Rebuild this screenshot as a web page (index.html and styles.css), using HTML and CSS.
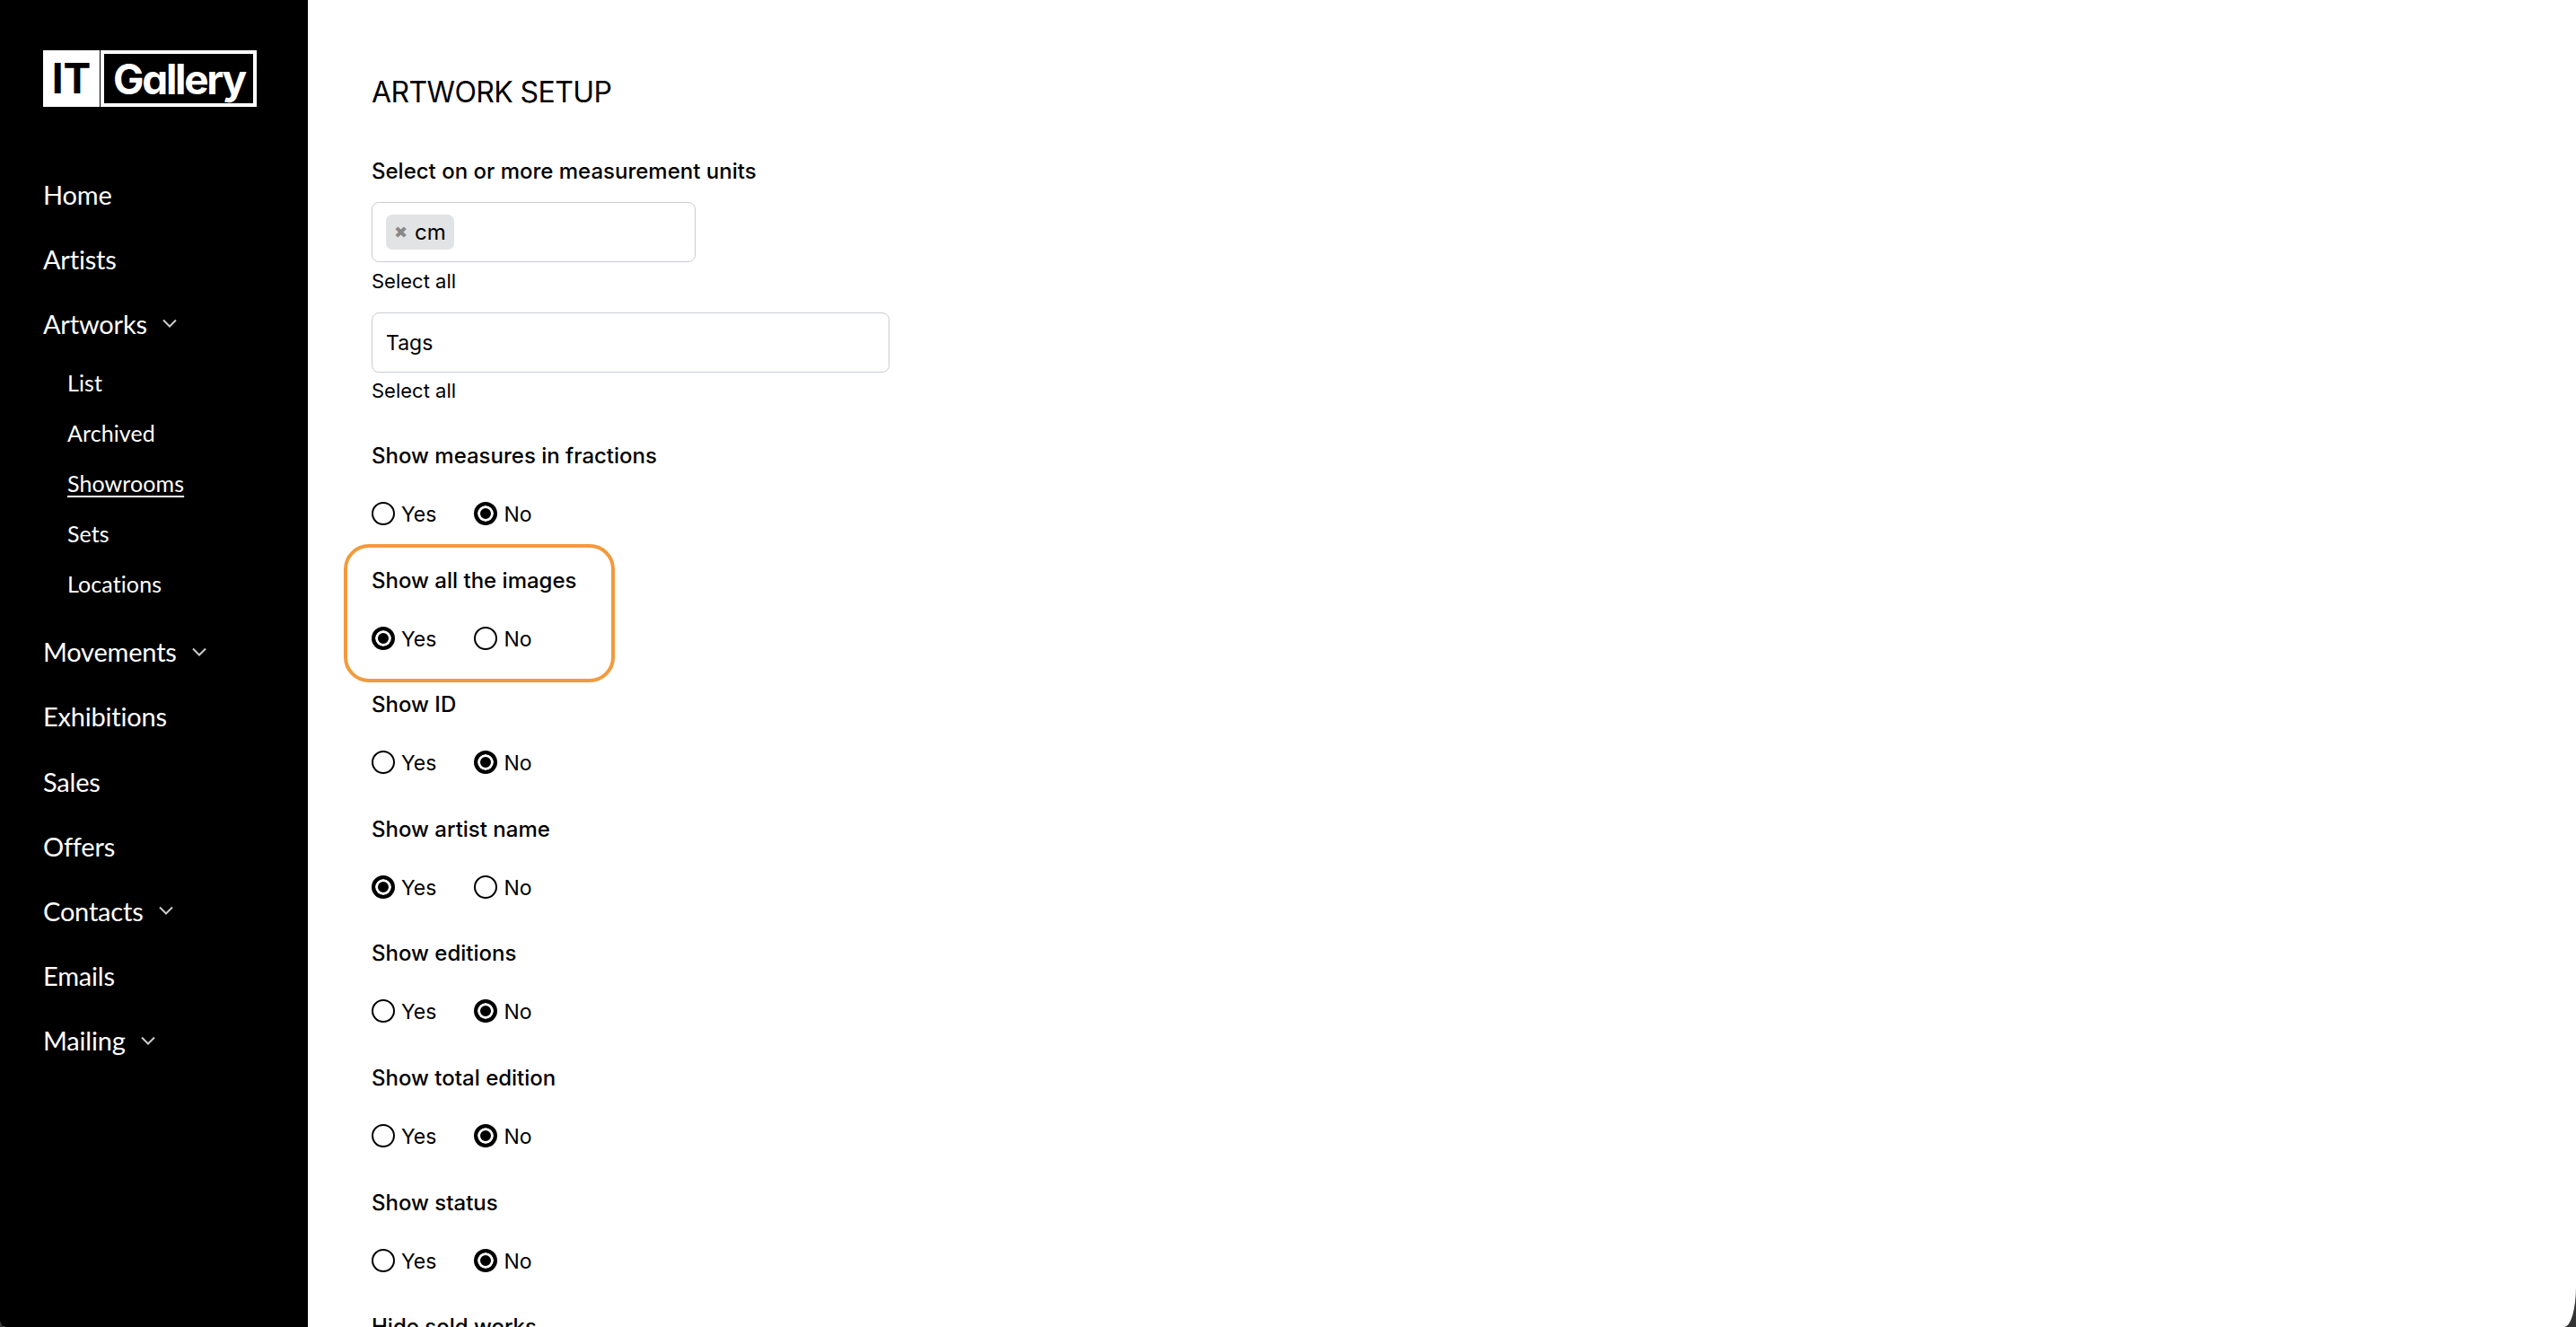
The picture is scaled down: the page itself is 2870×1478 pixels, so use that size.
FILE: index.html
```html
<!DOCTYPE html>
<html lang="en">
  <head>
    <meta charset="UTF-8" />
    <title>IT Gallery | Artwork setup</title>
    <link rel="stylesheet" href="styles.css">
  </head>
  <body>
    <div class="window">
      <!-- Sidebar start -->
      <aside class="sidebar">
        <div class="logo">
          <span class="logo-it">IT</span>
          <span class="logo-gallery">Gallery</span>
        </div>
        <nav class="menu">
          <a class="menu-item">Home</a>
          <a class="menu-item">Artists</a>
          <a class="menu-item">Artworks
            <svg class="chevron" viewBox="0 0 16 10"><path d="M1 1.5l7 7 7-7" /></svg>
          </a>
          <div class="submenu">
            <a class="submenu-item">List</a>
            <a class="submenu-item">Archived</a>
            <a class="submenu-item current">Showrooms</a>
            <a class="submenu-item">Sets</a>
            <a class="submenu-item">Locations</a>
          </div>
          <a class="menu-item">Movements
            <svg class="chevron" viewBox="0 0 16 10"><path d="M1 1.5l7 7 7-7" /></svg>
          </a>
          <a class="menu-item">Exhibitions</a>
          <a class="menu-item">Sales</a>
          <a class="menu-item">Offers</a>
          <a class="menu-item">Contacts
            <svg class="chevron" viewBox="0 0 16 10"><path d="M1 1.5l7 7 7-7" /></svg>
          </a>
          <a class="menu-item">Emails</a>
          <a class="menu-item">Mailing
            <svg class="chevron" viewBox="0 0 16 10"><path d="M1 1.5l7 7 7-7" /></svg>
          </a>
        </nav>
      </aside>
      <!-- Sidebar end -->

      <main class="content">
        <h1>ARTWORK SETUP</h1>

        <p class="field-label">Select on or more measurement units</p>
        <div class="select-box units">
          <span class="tag"><span class="tag-x">&#10006;</span>cm</span>
        </div>
        <a class="select-all">Select all</a>
        <div class="select-box tags">Tags</div>
        <a class="select-all">Select all</a>

        <div class="radio-list">
          <div class="radio-group">
            <p class="field-label">Show measures in fractions</p>
            <div class="radios">
              <label><input type="radio" name="fractions" />Yes</label>
              <label><input type="radio" name="fractions" checked />No</label>
            </div>
          </div>
          <div class="radio-group highlighted">
            <p class="field-label">Show all the images</p>
            <div class="radios">
              <label><input type="radio" name="images" checked />Yes</label>
              <label><input type="radio" name="images" />No</label>
            </div>
          </div>
          <div class="radio-group">
            <p class="field-label">Show ID</p>
            <div class="radios">
              <label><input type="radio" name="id" />Yes</label>
              <label><input type="radio" name="id" checked />No</label>
            </div>
          </div>
          <div class="radio-group">
            <p class="field-label">Show artist name</p>
            <div class="radios">
              <label><input type="radio" name="artist" checked />Yes</label>
              <label><input type="radio" name="artist" />No</label>
            </div>
          </div>
          <div class="radio-group">
            <p class="field-label">Show editions</p>
            <div class="radios">
              <label><input type="radio" name="editions" />Yes</label>
              <label><input type="radio" name="editions" checked />No</label>
            </div>
          </div>
          <div class="radio-group">
            <p class="field-label">Show total edition</p>
            <div class="radios">
              <label><input type="radio" name="total" />Yes</label>
              <label><input type="radio" name="total" checked />No</label>
            </div>
          </div>
          <div class="radio-group">
            <p class="field-label">Show status</p>
            <div class="radios">
              <label><input type="radio" name="status" />Yes</label>
              <label><input type="radio" name="status" checked />No</label>
            </div>
          </div>
          <div class="radio-group">
            <p class="field-label">Hide sold works</p>
          </div>
        </div>
      </main>
    </div>
  </body>
</html>
```
FILE: styles.css
```css
* {
  margin: 0;
  padding: 0;
  box-sizing: border-box;
}
html,
body {
  height: 100%;
  overflow: hidden;
  background-color: #333;
}
.window {
  height: 1478px;
  display: flex;
  overflow: hidden;
  border-bottom-right-radius: 13px 45px;
  border-bottom-left-radius: 6px;
  background-color: #fff;
}

/* sidebar */
.sidebar {
  width: 343px;
  flex-shrink: 0;
  background-color: #000;
  color: #fff;
  padding: 56px 0 0 48px;
  font-family: "Lato", sans-serif;
}
.logo {
  width: 238px;
  height: 63px;
  display: flex;
  font-family: "Inter", sans-serif;
  font-weight: 700;
  font-size: 46px;
  line-height: 57px;
  font-feature-settings: "cv11";
}
.logo-it {
  width: 63px;
  background-color: #fff;
  color: #000;
  text-align: center;
  line-height: 62px;
}
.logo-gallery {
  flex: 1;
  border: 4px solid #fff;
  margin-left: 1px;
  padding-left: 10px;
  letter-spacing: -2.3px;
}
.menu {
  margin-top: 61px;
  display: flex;
  flex-direction: column;
}
.menu-item {
  height: 72.2px;
  display: flex;
  align-items: center;
  font-size: 29px;
  letter-spacing: -0.2px;
}
.chevron {
  width: 16px;
  height: 10px;
  margin-left: 17px;
  fill: none;
  stroke: #ccc;
  stroke-width: 2;
}
.submenu {
  display: flex;
  flex-direction: column;
  padding: 1px 0 12px 27px;
}
.submenu-item {
  height: 56px;
  display: flex;
  align-items: center;
  font-size: 25px;
  letter-spacing: 0.1px;
}
.current {
  text-decoration: underline;
  text-underline-offset: 4px;
}

/* main form */
.content {
  flex: 1;
  padding: 83px 0 0 71px;
  color: #000;
  font-family: "Inter", sans-serif;
}
h1 {
  font-size: 32px;
  line-height: 40px;
  font-weight: 400;
  letter-spacing: -0.6px;
}
.field-label {
  font-size: 24px;
  line-height: 32px;
  font-weight: 500;
}
h1 + .field-label {
  margin-top: 52px;
}
.select-box {
  margin-top: 18px;
  height: 67px;
  border: 1px solid #c9cdd3;
  border-radius: 8px;
  display: flex;
  align-items: center;
  padding-left: 15px;
  font-size: 24px;
}
.units {
  width: 361px;
}
.tags {
  width: 577px;
  margin-top: 20px;
  font-size: 23px;
}
.tags + .select-all {
  margin-top: 6px;
}
.tag {
  height: 39px;
  padding: 0 9px;
  display: flex;
  align-items: center;
  background-color: #e2e3e5;
  border-radius: 7px;
}
.tag-x {
  color: #888;
  font-size: 18px;
  font-family: "DejaVu Sans", sans-serif;
  margin-right: 8px;
}
.select-all {
  display: block;
  margin-top: 7px;
  font-size: 22px;
  line-height: 29px;
}
.radio-list {
  margin-top: 42px;
}
.radio-group {
  position: relative;
  height: 138.6px;
}
.highlighted::after {
  content: "";
  position: absolute;
  left: -31px;
  top: -25px;
  width: 302px;
  height: 154px;
  box-sizing: border-box;
  border: 4px solid #f39a3b;
  border-radius: 28px;
}
.radios {
  display: flex;
  gap: 42px;
  margin-top: 36px;
}
.radios label {
  display: flex;
  align-items: center;
  gap: 7px;
  font-size: 23px;
  line-height: 26px;
}
.radios input {
  appearance: none;
  width: 26px;
  height: 26px;
  margin-top: -2px;
  border: 2px solid #000;
  border-radius: 50%;
  background-color: #fff;
}
.radios input:checked {
  border-width: 4px;
  background-color: #000;
  box-shadow: inset 0 0 0 3px #fff;
}
```
